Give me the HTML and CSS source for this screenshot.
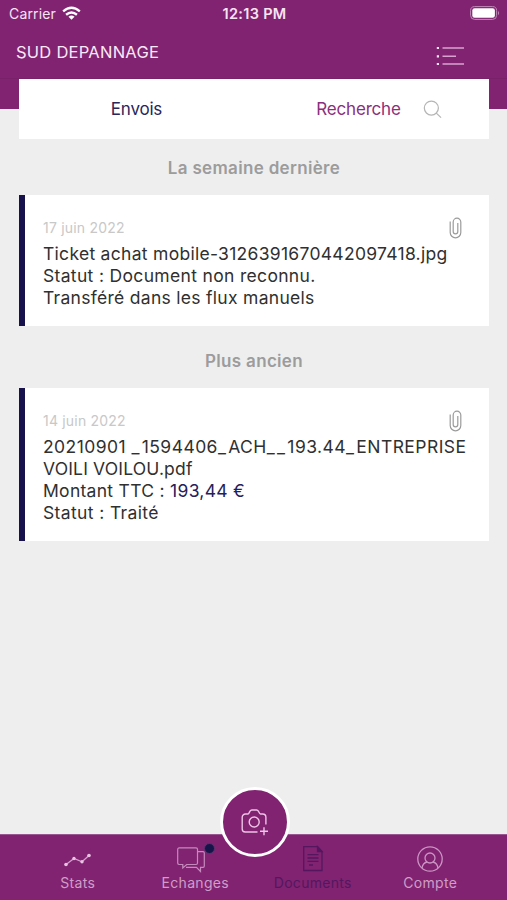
FILE: index.html
```html
<!DOCTYPE html>
<html lang="fr">
<head>
<meta charset="utf-8">
<title>Documents</title>
<link rel="stylesheet" href="styles.css">
</head>
<body>
<div class="app">
  <header class="header">
    <div class="status">
      <div class="carrier"><span class="carrier-name">Carrier</span>
        <svg width="19" height="15" viewBox="0 0 20 15" fill="none" stroke="#fff" stroke-width="2.5"><path d="M1.2 5.2Q10-2.2 18.8 5.2M4.3 8.8Q10 4 15.7 8.8"/><path d="M6.8 10.9Q10 8.3 13.2 10.9L10 14.2Z" fill="#fff" stroke="none"/></svg>
      </div>
      <span class="clock">12:13 PM</span>
      <svg class="battery" width="30" height="14" viewBox="0 0 30 14"><rect x=".6" y=".6" width="26" height="12.8" rx="4" fill="none" stroke="#c08bb8"/><rect x="2.3" y="2.3" width="22.6" height="9.4" rx="2.3" fill="#fff"/><path d="M28 4.7q2 2.3 0 4.6z" fill="#c08bb8"/></svg>
    </div>
    <div class="titlebar">
      <h1 class="title">SUD DEPANNAGE</h1>
      <svg width="28" height="20" viewBox="0 0 28 20" fill="none" stroke="#d9a3d0" stroke-width="1.5"><path d="M6.5 2H28M6.5 10.3H20M6.5 18H28"/><path d="M.8 2H3M.8 10.3H3M.8 18H3" stroke="#f8e6f5" stroke-width="2.2"/></svg>
    </div>
  </header>
  <main class="content">
    <div class="tabs">
      <span class="tab tab-sent">Envois</span>
      <span class="tab tab-search">Recherche
        <svg width="19" height="19" viewBox="0 0 20 20" fill="none" stroke="#b5b5b5" stroke-width="1.3"><circle cx="8.8" cy="8.5" r="7.4"/><path d="M14 13.8 19 18.5"/></svg>
      </span>
    </div>
    <h2 class="section section-week">La semaine dernière</h2>
    <article class="card">
      <div class="meta"><time>17 juin 2022</time>
        <svg class="clip" width="14" height="22" viewBox="0 0 14 22"><path d="M1.2 4.5V15.5a5.3 5.3 0 0 0 10.6 0V5a3.8 3.8 0 0 0-7.6 0v9.5a2.3 2.3 0 0 0 4.6 0V6"/></svg>
      </div>
      <p class="line line-ticket">Ticket achat mobile-3126391670442097418.jpg</p>
      <p class="line line-unknown">Statut : Document non reconnu.</p>
      <p class="line line-manual">Transféré dans les flux manuels</p>
    </article>
    <h2 class="section section-older">Plus ancien</h2>
    <article class="card">
      <div class="meta"><time>14 juin 2022</time>
        <svg class="clip" width="14" height="22" viewBox="0 0 14 22"><path d="M1.2 4.5V15.5a5.3 5.3 0 0 0 10.6 0V5a3.8 3.8 0 0 0-7.6 0v9.5a2.3 2.3 0 0 0 4.6 0V6"/></svg>
      </div>
      <p class="line line-file">20210901 <span class="gap">_</span>1594406<span class="gap">_</span>ACH<span class="gap">__</span>193.44<span class="gap">_</span>ENTREPRISE</p>
      <p class="line line-pdf">VOILI VOILOU.pdf</p>
      <p class="line line-amount">Montant TTC : <span class="amount">193,44 €</span></p>
      <p class="line line-done">Statut : Traité</p>
    </article>
  </main>
  <nav class="nav">
    <a class="item">
      <svg width="28" height="28" viewBox="0 0 28 28" fill="none" stroke="#d5a0ce" stroke-width="1.3"><path d="M2 19.5 10 13.5 18 16.8 25 10.5"/><g fill="#e8c4e2" stroke="none"><circle cx="2" cy="19.5" r="1.8"/><circle cx="10" cy="13.5" r="1.7"/><circle cx="18" cy="16.8" r="1.7"/><circle cx="25" cy="10.5" r="1.8"/></g></svg>
      <span class="label">Stats</span>
    </a>
    <a class="item">
      <span class="chat">
        <svg width="28" height="28" viewBox="0 0 28 28" fill="none" stroke="#c58abd" stroke-width="1.2"><path d="M2 2.8H19a1.5 1.5 0 0 1 1.5 1.5V18a1.5 1.5 0 0 1-1.5 1.5H9.7L5.8 23V19.5H2A1.5 1.5 0 0 1 .7 18V4.3A1.5 1.5 0 0 1 2 2.8Z"/><path d="M20.5 6.7H26a1.4 1.4 0 0 1 1.3 1.4V21a1.4 1.4 0 0 1-1.3 1.4H23.5V26.5L19.5 22.4H9"/></svg>
        <i class="dot"></i>
      </span>
      <span class="label">Echanges</span>
    </a>
    <a class="item active">
      <svg width="28" height="28" viewBox="0 0 28 28" fill="none" stroke="#54175f" stroke-width="1.3"><path d="M4.7 1.7H18.5L23 6.5V25.5H4.7Z"/><path d="M18.5 1.7V6.5H23Z" fill="#54175f"/><path d="M8.5 9.7H19.5M8.5 13H19.5M8.5 16.3H19.5M10 20H14"/></svg>
      <span class="label">Documents</span>
    </a>
    <a class="item">
      <svg width="28" height="28" viewBox="0 0 28 28" fill="none" stroke="#cb94c4" stroke-width="1.3"><circle cx="14" cy="14" r="12.2"/><circle cx="14" cy="13" r="5"/><path d="M6 23.2C6.5 19.5 8.5 17.5 11 17M22 23.2C21.5 19.5 19.5 17.5 17 17"/></svg>
      <span class="label">Compte</span>
    </a>
    <button class="camera" aria-label="Photo">
      <svg width="28" height="28" viewBox="0 0 28 28" fill="none" stroke="#eec4e8" stroke-width="1.4"><path d="M16.5 24H4.2A3 3 0 0 1 1.2 21V9.2A3.2 3.2 0 0 1 4.4 6H7C8.5 6 8.2 2 10.7 2H15.7C18.2 2 17.8 6 19.5 6H21.7A3.2 3.2 0 0 1 24.9 9.2V16.5"/><circle cx="13.2" cy="14" r="5"/><path d="M19 23.2H27M23 19.2V27.2"/></svg>
    </button>
  </nav>
</div>
</body>
</html>
```
FILE: styles.css
```css
* { box-sizing: border-box; margin: 0; padding: 0; }
body { background: #eee; font-family: Inter, "Liberation Sans", sans-serif; }
.app { display: flex; flex-direction: column; height: 900px; width: 507px; overflow: hidden; }
svg { display: block; flex: none; }
.header { background: #812371; height: 109px; flex: none; }
.status { height: 26px; display: grid; grid-template-columns: 1fr auto 1fr; align-items: center; padding: 0 7px 0 9px; color: #f6e4f3; }
.carrier { display: flex; align-items: center; gap: 6px; font-size: 14px; }
.carrier-name { letter-spacing: .15px; }
.clock { font-size: 14.5px; font-weight: 600; letter-spacing: .3px; }
.battery { justify-self: end; }
.titlebar { height: 53px; display: flex; justify-content: space-between; align-items: flex-start; padding: 15px 43px 0 16px; border-bottom: 1px solid #782068; }
.titlebar svg { margin-top: 5px; }
.title { font-size: 16.5px; line-height: 23px; font-weight: 400; color: #faeaf7; letter-spacing: .25px; }
.content { flex: 1; margin-top: -30px; padding: 0 18px 0 19px; }
.tabs { height: 60px; background: #fff; display: grid; grid-template-columns: 1fr 1fr; align-items: center; font-size: 17px; }
.tab { display: flex; align-items: center; justify-content: center; }
.tab-sent { color: #29265b; letter-spacing: -.2px; }
.tab-search { color: #8b2f7c; gap: 22px; letter-spacing: -.2px; padding-left: 15px; }
.section { height: 56px; line-height: 58px; text-align: center; font-size: 17px; font-weight: 600; letter-spacing: .32px; color: #9c9c9c; }
.section-older { height: 62px; line-height: 70px; }
.card { background: #fff; border-left: 6px solid #17124b; padding: 22px 18px 17px; }
.meta { display: flex; align-items: center; justify-content: space-between; height: 22px; padding-right: 8px; margin-bottom: 4px; font-size: 14px; color: #c8c8c8; letter-spacing: .2px; }
.meta time { margin-top: -1px; }
.clip { fill: none; stroke: #9b9b9b; stroke-width: 1.2; }
.line { font-size: 17.5px; line-height: 22px; color: #303030; white-space: nowrap; letter-spacing: .29px; }
.line-unknown { letter-spacing: .33px; }
.line-file { letter-spacing: .44px; }
.line-pdf { letter-spacing: .17px; }
.line-done { letter-spacing: .37px; }
.gap { letter-spacing: 2.3px; }
.amount { color: #25205c; }
.nav { position: relative; height: 66px; flex: none; background: #812371; border-top: 1px solid #9a5690; display: grid; grid-template-columns: repeat(4, 1fr); padding: 10px 18px 0 19px; }
.item { display: flex; flex-direction: column; align-items: center; color: #cf9dc8; }
.active { color: #54175f; }
.label { font-size: 14px; line-height: 20px; letter-spacing: .3px; }
.chat { position: relative; margin-right: 9px; }
.dot { position: absolute; left: 27px; top: -2px; width: 11px; height: 11px; border-radius: 50%; background: #171449; border: 1px solid #5b3470; }
.camera { position: absolute; left: 220px; top: -48px; width: 70px; height: 70px; border-radius: 50%; border: 3px solid #fff; background: #812371; display: flex; align-items: center; justify-content: center; }
```
